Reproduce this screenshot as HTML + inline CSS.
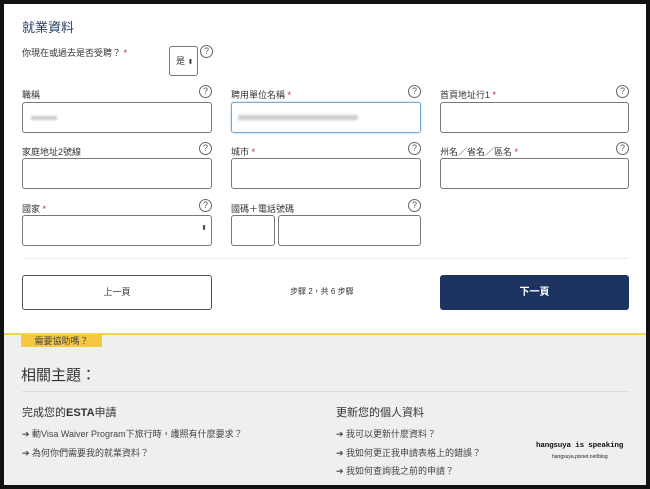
<!DOCTYPE html>
<html><head><meta charset="utf-8"><style>
*{box-sizing:border-box;margin:0;padding:0}
body{width:650px;height:489px;background:#111;position:relative;overflow:hidden;font-family:"Liberation Sans","Noto Sans CJK TC",sans-serif;color:#333}
.a{position:absolute}
#w{left:4px;top:4px;width:642px;height:329px;background:#fff}
#g{left:4px;top:333px;width:642px;height:152px;background:#eef0f0;border-top:2px solid #f5d24a}
.lbl{font-size:9px;color:#333}
.r{color:#c0272d}
.in{border:1px solid #777;border-radius:3px;background:#fff;height:31px}
.q{width:13px;height:13px;border:1px solid #666;border-radius:50%;font-size:9px;line-height:11px;text-align:center;color:#555}
.lk{font-size:9px;color:#444}
</style></head><body>
<div class="a" id="w"></div>
<div class="a" id="g"></div>
<div class="a" style="left:22px;top:17px;font-size:13px;color:#1f3a5f">就業資料</div>
<div class="a lbl" style="left:22px;top:46px">你現在或過去是否受聘？ <span class="r">*</span></div>
<div class="a in" style="left:169px;top:46px;width:29px;height:30px;font-size:9px;line-height:28px;padding-left:6px">是 <span style="font-size:7px">⬍</span></div>
<div class="a q" style="left:200px;top:45px">?</div>

<div class="a lbl" style="left:22px;top:88px">職稱</div><div class="a q" style="left:199px;top:85px">?</div>
<div class="a lbl" style="left:231px;top:88px">聘用單位名稱 <span class="r">*</span></div><div class="a q" style="left:408px;top:85px">?</div>
<div class="a lbl" style="left:440px;top:88px">首頁地址行1 <span class="r">*</span></div><div class="a q" style="left:616px;top:85px">?</div>
<div class="a in" style="left:22px;top:102px;width:190px"><div class="a" style="left:8px;top:13px;width:26px;height:4px;background:#ccc;filter:blur(1px)"></div></div>
<div class="a in" style="left:231px;top:102px;width:190px;border-color:#7aa8d6;box-shadow:0 0 2px #9cc3e8"><div class="a" style="left:6px;top:12px;width:120px;height:5px;background:#ccc;filter:blur(1.2px)"></div></div>
<div class="a in" style="left:440px;top:102px;width:189px"></div>

<div class="a lbl" style="left:22px;top:145px">家庭地址2號線</div><div class="a q" style="left:199px;top:142px">?</div>
<div class="a lbl" style="left:231px;top:145px">城市 <span class="r">*</span></div><div class="a q" style="left:408px;top:142px">?</div>
<div class="a lbl" style="left:440px;top:145px">州名／省名／區名 <span class="r">*</span></div><div class="a q" style="left:616px;top:142px">?</div>
<div class="a in" style="left:22px;top:158px;width:190px"></div>
<div class="a in" style="left:231px;top:158px;width:190px"></div>
<div class="a in" style="left:440px;top:158px;width:189px"></div>

<div class="a lbl" style="left:22px;top:202px">國家 <span class="r">*</span></div><div class="a q" style="left:199px;top:199px">?</div>
<div class="a lbl" style="left:231px;top:202px">國碼＋電話號碼</div><div class="a q" style="left:408px;top:199px">?</div>
<div class="a in" style="left:22px;top:215px;width:190px"><span class="a" style="right:4px;top:8px;font-size:7px">⬍</span></div>
<div class="a in" style="left:231px;top:215px;width:44px"></div>
<div class="a in" style="left:278px;top:215px;width:143px"></div>

<div class="a" style="left:22px;top:258px;width:607px;border-top:1px solid #eee"></div>
<div class="a in" style="left:22px;top:275px;width:190px;height:35px;border-color:#555;font-size:9px;text-align:center;line-height:33px">上一頁</div>
<div class="a" style="left:290px;top:286px;font-size:8px;color:#333">步驟 2，共 6 步驟</div>
<div class="a" style="left:440px;top:275px;width:189px;height:35px;background:#1d3461;border-radius:3px;color:#fff;font-size:10px;font-weight:bold;text-align:center;line-height:35px">下一頁</div>

<div class="a" style="left:21px;top:335px;width:81px;height:12px;background:#f5c842;font-size:9px;line-height:12px;text-align:center;color:#444">需要協助嗎？</div>
<div class="a" style="left:21px;top:364px;font-size:15px;color:#333">相關主題：</div>
<div class="a" style="left:22px;top:391px;width:607px;border-top:1px solid #dcdede"></div>
<div class="a" style="left:22px;top:404px;font-size:11px;color:#333">完成您的<b>ESTA</b>申請</div>
<div class="a lk" style="left:22px;top:427px">➔ 動Visa Waiver Program下旅行時，護照有什麼要求？</div>
<div class="a lk" style="left:22px;top:446px">➔ 為何你們需要我的就業資料？</div>
<div class="a" style="left:336px;top:404px;font-size:11px;color:#333">更新您的個人資料</div>
<div class="a lk" style="left:336px;top:427px">➔ 我可以更新什麼資料？</div>
<div class="a lk" style="left:336px;top:446px">➔ 我如何更正我申請表格上的錯誤？</div>
<div class="a lk" style="left:336px;top:464px">➔ 我如何查詢我之前的申請？</div>
<div class="a" style="left:536px;top:442px;font-size:7.6px;font-weight:bold;color:#111;font-family:'Liberation Mono',monospace;letter-spacing:-0.2px">hangsuya is speaking</div>
<div class="a" style="left:552px;top:454px;font-size:5px;color:#222">hangsuya.pixnet.net/blog</div>
</body></html>
